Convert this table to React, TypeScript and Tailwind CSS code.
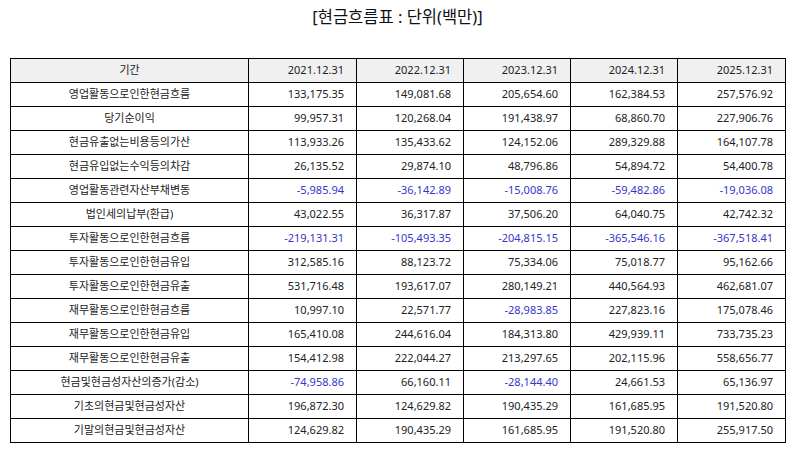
import React from "react";

const rows: string[][] = [
  ["영업활동으로인한현금흐름", "133,175.35", "149,081.68", "205,654.60", "162,384.53", "257,576.92"],
  ["당기순이익", "99,957.31", "120,268.04", "191,438.97", "68,860.70", "227,906.76"],
  ["현금유출없는비용등의가산", "113,933.26", "135,433.62", "124,152.06", "289,329.88", "164,107.78"],
  ["현금유입없는수익등의차감", "26,135.52", "29,874.10", "48,796.86", "54,894.72", "54,400.78"],
  ["영업활동관련자산부채변동", "-5,985.94", "-36,142.89", "-15,008.76", "-59,482.86", "-19,036.08"],
  ["법인세의납부(환급)", "43,022.55", "36,317.87", "37,506.20", "64,040.75", "42,742.32"],
  ["투자활동으로인한현금흐름", "-219,131.31", "-105,493.35", "-204,815.15", "-365,546.16", "-367,518.41"],
  ["투자활동으로인한현금유입", "312,585.16", "88,123.72", "75,334.06", "75,018.77", "95,162.66"],
  ["투자활동으로인한현금유출", "531,716.48", "193,617.07", "280,149.21", "440,564.93", "462,681.07"],
  ["재무활동으로인한현금흐름", "10,997.10", "22,571.77", "-28,983.85", "227,823.16", "175,078.46"],
  ["재무활동으로인한현금유입", "165,410.08", "244,616.04", "184,313.80", "429,939.11", "733,735.23"],
  ["재무활동으로인한현금유출", "154,412.98", "222,044.27", "213,297.65", "202,115.96", "558,656.77"],
  ["현금및현금성자산의증가(감소)", "-74,958.86", "66,160.11", "-28,144.40", "24,661.53", "65,136.97"],
  ["기초의현금및현금성자산", "196,872.30", "124,629.82", "190,435.29", "161,685.95", "191,520.80"],
  ["기말의현금및현금성자산", "124,629.82", "190,435.29", "161,685.95", "191,520.80", "255,917.50"],
];

const headers = ["2021.12.31", "2022.12.31", "2023.12.31", "2024.12.31", "2025.12.31"];

export default function App() {
  return (
    <div
      className="w-[795px] h-[452px] bg-white text-[#222]"
      style={{ fontFamily: '"Noto Sans", "Noto Sans CJK KR", sans-serif' }}
    >
      <div className="h-[58px] pt-[5px] text-center text-[16.5px] leading-[24px] text-[#111]">
        [현금흐름표 : 단위(백만)]
      </div>
      <table className="ml-[10px] w-[775px] table-fixed border-collapse text-[11px]">
        <colgroup>
          <col className="w-[238px]" />
          <col className="w-[108px]" />
          <col className="w-[107px]" />
          <col className="w-[107px]" />
          <col className="w-[107px]" />
          <col className="w-[108px]" />
        </colgroup>
        <thead>
          <tr className="h-[24px] bg-[#f0f0f0]">
            <th className="border border-black p-0 text-center font-normal">기간</th>
            {headers.map((h) => (
              <th key={h} className="border border-black p-0 pr-[12px] text-right font-normal">
                {h}
              </th>
            ))}
          </tr>
        </thead>
        <tbody>
          {rows.map((r) => (
            <tr key={r[0]} className="h-[24px]">
              <td className="border border-black p-0 text-center">{r[0]}</td>
              {r.slice(1).map((v, i) => (
                <td
                  key={i}
                  className={
                    v.startsWith("-")
                      ? "border border-black p-0 pr-[12px] text-right text-[#3636c8]"
                      : "border border-black p-0 pr-[12px] text-right"
                  }
                >
                  {v}
                </td>
              ))}
            </tr>
          ))}
        </tbody>
      </table>
    </div>
  );
}
